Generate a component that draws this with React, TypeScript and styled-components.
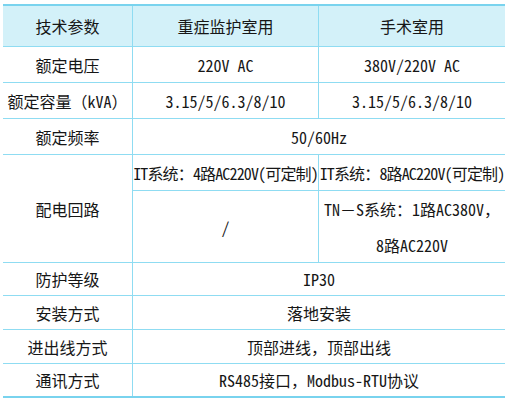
import React from "react";
import styled, { createGlobalStyle } from "styled-components";

const Global = createGlobalStyle`
  html, body { margin: 0; padding: 0; background: #ffffff; }
  body {
    font-family: "Noto Sans Mono CJK SC", "Noto Sans CJK SC", "DejaVu Sans Mono", monospace;
    color: #161616;
  }
`;

const Table = styled.div`
  margin: 4px 0 0 3px;
  width: 502px;
  display: grid;
  grid-template-columns: 129px 185px 186px;
  grid-template-rows: 40px 35px 35px 35px 35px 71px 32px 33px 33px 32px;
  gap: 1px;
  background: #8fdcf2;
  border-top: 2px solid #79d3ee;
  border-bottom: 2px solid #79d3ee;
`;

const Cell = styled.div<{ $head?: boolean; $span?: boolean; $rows?: number; $tight?: boolean }>`
  background: ${(p) => (p.$head ? "#d3f1f9" : "#ffffff")};
  display: flex;
  align-items: center;
  justify-content: center;
  text-align: center;
  font-size: 16px;
  white-space: nowrap;
  letter-spacing: ${(p) => (p.$tight ? "-0.85px" : "0")};
  grid-column: ${(p) => (p.$span ? "2 / span 2" : "auto")};
  grid-row: ${(p) => (p.$rows ? `span ${p.$rows}` : "auto")};
`;

const Stack = styled.div`
  display: flex;
  flex-direction: column;
  line-height: 36px;
`;

export default function App() {
  return (
    <>
      <Global />
      <Table>
        <Cell $head>技术参数</Cell>
        <Cell $head>重症监护室用</Cell>
        <Cell $head>手术室用</Cell>

        <Cell>额定电压</Cell>
        <Cell>220V AC</Cell>
        <Cell>380V/220V AC</Cell>

        <Cell>额定容量（kVA）</Cell>
        <Cell>3.15/5/6.3/8/10</Cell>
        <Cell>3.15/5/6.3/8/10</Cell>

        <Cell>额定频率</Cell>
        <Cell $span>50/60Hz</Cell>

        <Cell $rows={2}>配电回路</Cell>
        <Cell $tight>IT系统：4路AC220V(可定制)</Cell>
        <Cell $tight>IT系统：8路AC220V(可定制)</Cell>
        <Cell>/</Cell>
        <Cell>
          <Stack>
            <span>TN－S系统：1路AC380V，</span>
            <span>8路AC220V</span>
          </Stack>
        </Cell>

        <Cell>防护等级</Cell>
        <Cell $span>IP30</Cell>

        <Cell>安装方式</Cell>
        <Cell $span>落地安装</Cell>

        <Cell>进出线方式</Cell>
        <Cell $span>顶部进线，顶部出线</Cell>

        <Cell>通讯方式</Cell>
        <Cell $span>RS485接口，Modbus-RTU协议</Cell>
      </Table>
    </>
  );
}
